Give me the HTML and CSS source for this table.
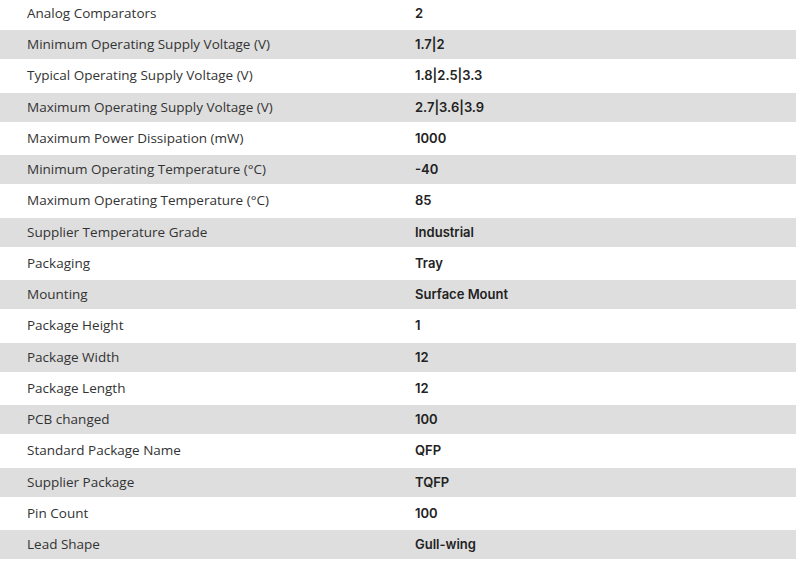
FILE: index.html
```html
<!DOCTYPE html>
<html>
<head>
<meta charset="utf-8">
<link rel="stylesheet" href="styles.css">
</head>
<body>
<div class="specs">
  <div class="row"><div class="label">Analog Comparators</div><div class="value">2</div></div>
  <div class="row shade"><div class="label">Minimum Operating Supply Voltage (V)</div><div class="value">1.7|2</div></div>
  <div class="row"><div class="label">Typical Operating Supply Voltage (V)</div><div class="value">1.8|2.5|3.3</div></div>
  <div class="row shade"><div class="label">Maximum Operating Supply Voltage (V)</div><div class="value">2.7|3.6|3.9</div></div>
  <div class="row"><div class="label">Maximum Power Dissipation (mW)</div><div class="value">1000</div></div>
  <div class="row shade"><div class="label">Minimum Operating Temperature (°C)</div><div class="value">-40</div></div>
  <div class="row"><div class="label">Maximum Operating Temperature (°C)</div><div class="value">85</div></div>
  <div class="row shade"><div class="label">Supplier Temperature Grade</div><div class="value">Industrial</div></div>
  <div class="row"><div class="label">Packaging</div><div class="value">Tray</div></div>
  <div class="row shade"><div class="label">Mounting</div><div class="value">Surface Mount</div></div>
  <div class="row"><div class="label">Package Height</div><div class="value">1</div></div>
  <div class="row shade"><div class="label">Package Width</div><div class="value">12</div></div>
  <div class="row"><div class="label">Package Length</div><div class="value">12</div></div>
  <div class="row shade"><div class="label">PCB changed</div><div class="value">100</div></div>
  <div class="row"><div class="label">Standard Package Name</div><div class="value">QFP</div></div>
  <div class="row shade"><div class="label">Supplier Package</div><div class="value">TQFP</div></div>
  <div class="row"><div class="label">Pin Count</div><div class="value">100</div></div>
  <div class="row shade"><div class="label">Lead Shape</div><div class="value">Gull-wing</div></div>
</div>
</body>
</html>
```
FILE: styles.css
```css
html, body {
  margin: 0;
  padding: 0;
  background: #fff;
}
.specs {
  display: flex;
  flex-direction: column;
  gap: 2.25px;
  margin-top: -1.25px;
}
.row {
  display: flex;
  align-items: center;
  height: 29px;
  padding-bottom: 1px;
  box-sizing: border-box;
  color: #333;
}
.shade {
  background: #dedede;
}
.label {
  width: 388px;
  padding-left: 27px;
  font-family: "Open Sans", sans-serif;
  font-size: 13.5px;
}
.value {
  font-family: Inter, sans-serif;
  font-weight: 600;
  font-size: 13px;
  color: #222;
}
```
